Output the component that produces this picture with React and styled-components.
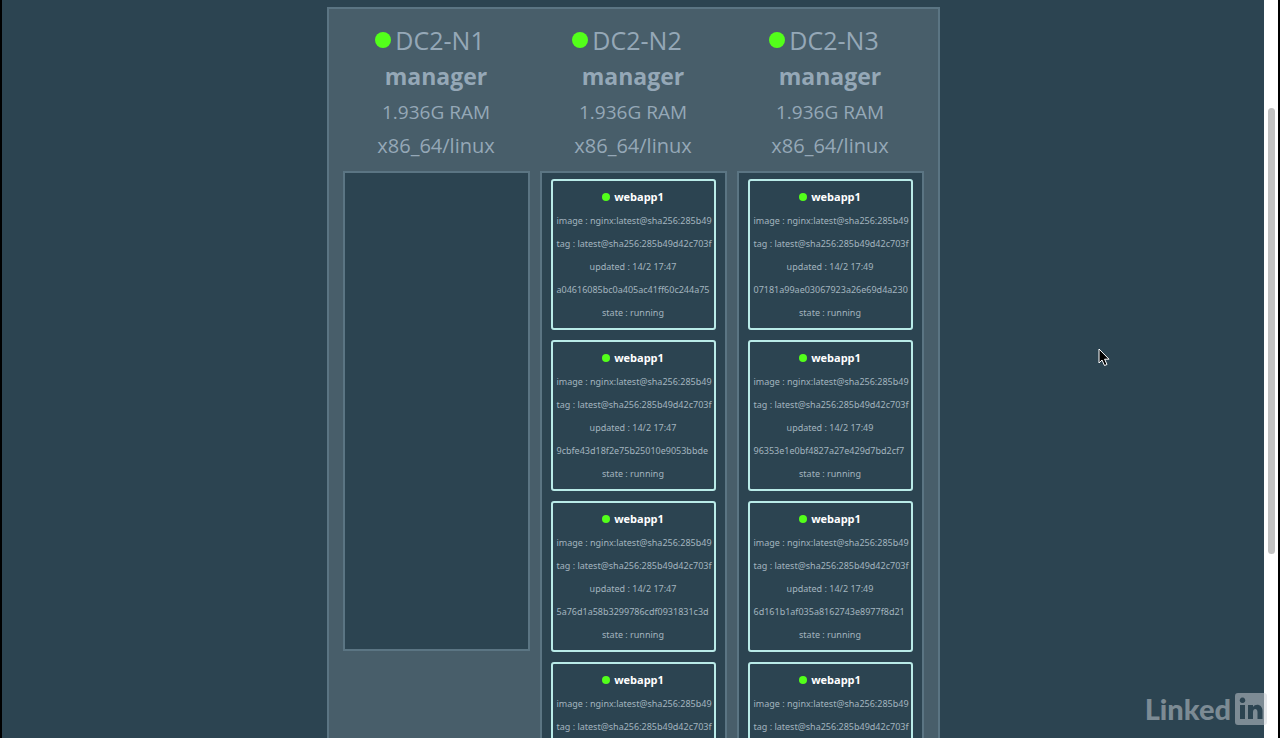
import React from "react";
import styled, { createGlobalStyle } from "styled-components";

const GlobalStyle = createGlobalStyle`
  * { box-sizing: border-box; }
  html, body { margin: 0; height: 100%; background: #000; }
  body { overflow: hidden; font-family: "Open Sans", "Noto Sans", sans-serif; color: #95a8b7; }
  h2, h3, p { margin: 0; }
`;

const Screen = styled.div`
  display: flex;
  height: 100vh;
  padding: 0 2px;
  background: #000;
`;

const Viewport = styled.main`
  flex: 1;
  min-width: 0;
  overflow: hidden;
  padding-top: 7px;
  background: #2c4451;
`;

const Cluster = styled.section`
  display: flex;
  align-items: flex-start;
  gap: 10px;
  width: max-content;
  margin: 0 auto;
  padding: 14px;
  border: 2px solid #5b7583;
  background: #485e6a;
`;

const Node = styled.article`
  width: 187px;
  text-align: center;
`;

const NodeHeader = styled.header`
  height: 148px;
`;

const NodeName = styled.h2`
  display: flex;
  align-items: center;
  justify-content: center;
  gap: 4px;
  padding-right: 12px;
  font-size: 25px;
  font-weight: 400;
  line-height: 34px;
`;

const Role = styled.p`
  font-size: 23px;
  font-weight: 700;
  line-height: 38px;
`;

const Spec = styled.p`
  font-size: ${(p) => p.$size}px;
  line-height: 34px;
`;

const Dot = styled.span`
  flex: none;
  width: ${(p) => p.$size}px;
  height: ${(p) => p.$size}px;
  border-radius: 50%;
  background: #53ff1a;
`;

const TaskList = styled.div`
  display: flex;
  flex-direction: column;
  gap: 10px;
  min-height: 480px;
  padding: 6px 9px;
  border: 2px solid #5b7583;
  background: #2c4451;
`;

const Task = styled.section`
  height: 151px;
  padding: 4px 4px 0;
  border: 2px solid #b9ebe8;
  border-radius: 3px;
  color: #a3b4bf;
  font-family: "Noto Sans", "Open Sans", sans-serif;
  font-size: 9px;
  line-height: 23px;
  white-space: nowrap;
`;

const TaskName = styled.h3`
  display: flex;
  align-items: center;
  justify-content: center;
  gap: 4px;
  margin-bottom: 1px;
  color: #fff;
  font-family: "Open Sans", "Noto Sans", sans-serif;
  font-size: 11px;
  font-weight: 700;
  line-height: 23px;
`;

const Digest = styled.p`
  text-align: left;
`;

const Scrollbar = styled.aside`
  display: flex;
  flex-direction: column;
  align-items: center;
  width: 14px;
  background: #fff;
`;

const Track = styled.div`
  flex: ${(p) => p.$grow};
`;

const Thumb = styled.div`
  flex: 446;
  width: 7px;
  border-radius: 4px;
  background: #c1c1c1;
`;

const Pointer = styled.svg`
  position: absolute;
  left: 1098px;
  top: 348px;
`;

const Brand = styled.div`
  position: absolute;
  right: 13px;
  bottom: 13px;
  display: flex;
  align-items: center;
  gap: 4px;
  color: rgba(205, 210, 215, 0.5);
  font-family: Lato, sans-serif;
  font-size: 29px;
  font-weight: 900;
  line-height: 32px;
`;

const nodes = [
  { name: "DC2-N1", updated: "", tasks: [] },
  {
    name: "DC2-N2",
    updated: "14/2 17:47",
    tasks: [
      "a04616085bc0a405ac41ff60c244a75",
      "9cbfe43d18f2e75b25010e9053bbde",
      "5a76d1a58b3299786cdf0931831c3d",
      "",
    ],
  },
  {
    name: "DC2-N3",
    updated: "14/2 17:49",
    tasks: [
      "07181a99ae03067923a26e69d4a230",
      "96353e1e0bf4827a27e429d7bd2cf7",
      "6d161b1af035a8162743e8977f8d21",
      "",
    ],
  },
];

function TaskCard({ id, updated }) {
  return (
    <Task>
      <TaskName>
        <Dot $size={8} />
        webapp1
      </TaskName>
      <Digest>image : nginx:latest@sha256:285b49</Digest>
      <Digest>tag : latest@sha256:285b49d42c703f</Digest>
      <p>updated : {updated}</p>
      <Digest>{id}</Digest>
      <p>state : running</p>
    </Task>
  );
}

export default function App() {
  return (
    <>
      <GlobalStyle />
      <Screen>
        <Viewport>
          <Cluster>
            {nodes.map((node) => (
              <Node key={node.name}>
                <NodeHeader>
                  <NodeName>
                    <Dot $size={16} />
                    {node.name}
                  </NodeName>
                  <Role>manager</Role>
                  <Spec $size={19}>1.936G RAM</Spec>
                  <Spec $size={20}>x86_64/linux</Spec>
                </NodeHeader>
                <TaskList>
                  {node.tasks.map((id, i) => (
                    <TaskCard key={i} id={id} updated={node.updated} />
                  ))}
                </TaskList>
              </Node>
            ))}
          </Cluster>
        </Viewport>
        <Scrollbar aria-hidden="true">
          <Track $grow={108} />
          <Thumb />
          <Track $grow={184} />
        </Scrollbar>
      </Screen>
      <Pointer width="12" height="19" viewBox="0 0 12 19" aria-hidden="true">
        <path
          d="M1 1v14l3-3 2.5 5.5 2.5-1-2.4-5.3H11z"
          fill="#000"
          stroke="#fff"
          strokeWidth="1"
        />
      </Pointer>
      <Brand>
        Linked
        <svg width="32" height="32" viewBox="0 0 32 32" aria-label="in">
          <path
            fillRule="evenodd"
            fill="currentColor"
            d="M3 0h26q3 0 3 3v26q0 3-3 3H3q-3 0-3-3V3q0-3 3-3zM5 12v14h5V12zM7.500 4.500a2.800 2.800 0 1 0 0.010 0zM13 12v14h5v-7c0-4 4.500-4 4.500 0v7h5v-8c0-7-7-8-9.500-4v-2z"
          />
        </svg>
      </Brand>
    </>
  );
}
